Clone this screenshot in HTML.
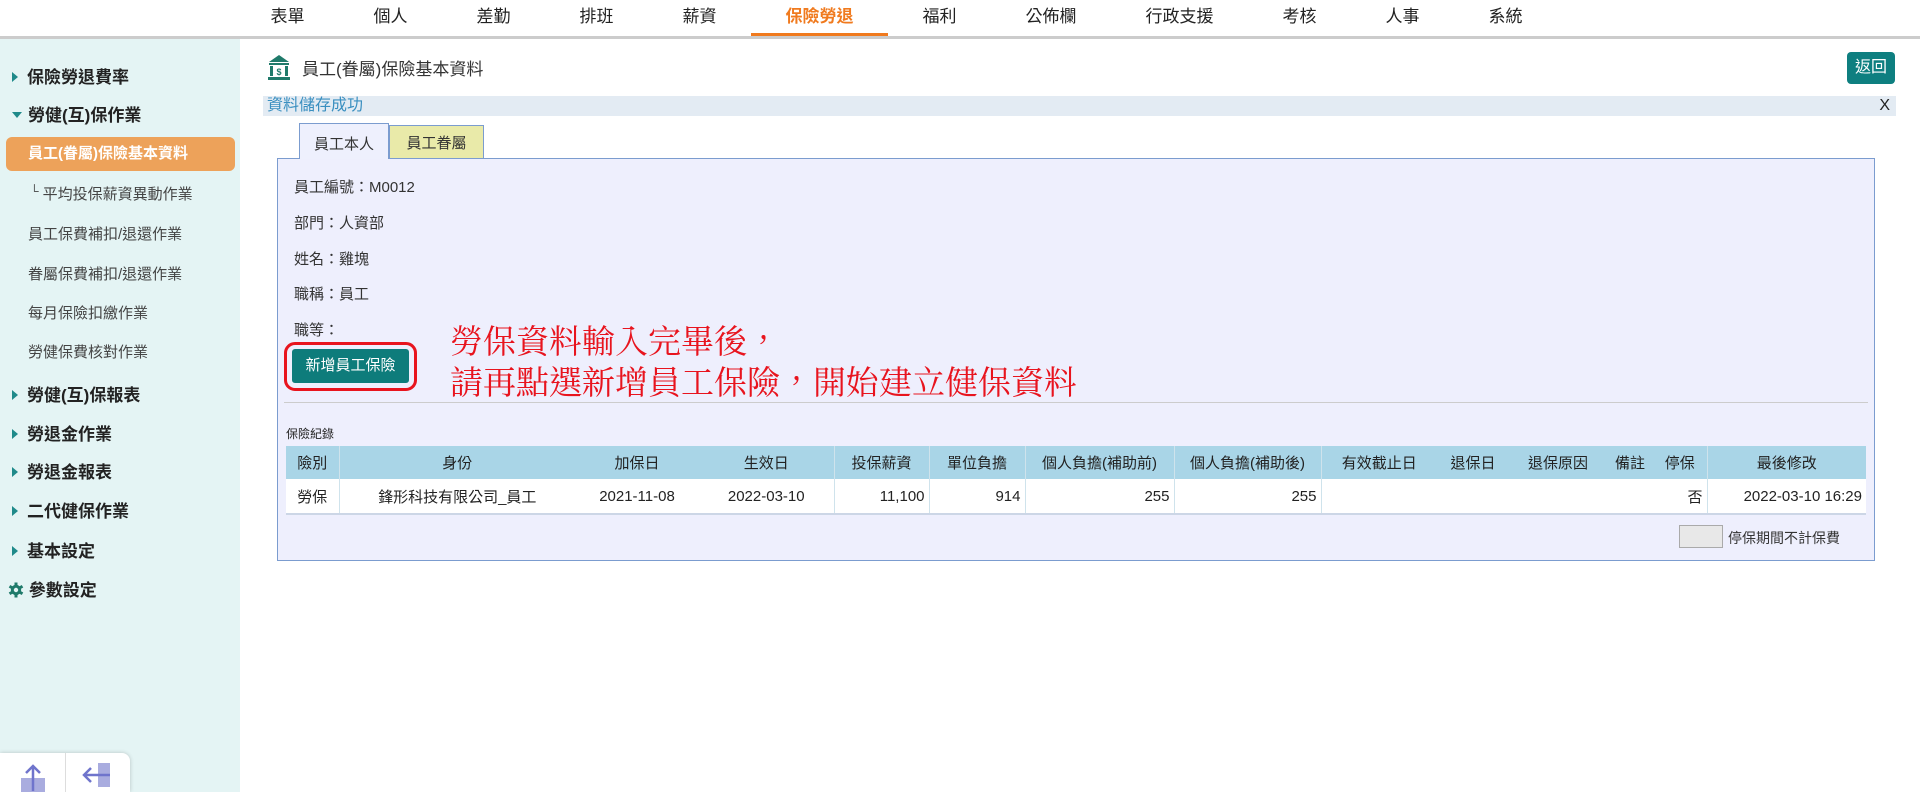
<!DOCTYPE html>
<html><head><meta charset="utf-8"><style>
*{margin:0;padding:0;box-sizing:border-box}
body{width:1920px;height:792px;overflow:hidden;background:#fff;font-family:"Liberation Sans","Noto Sans CJK TC",sans-serif;color:#333;position:relative}
.nav{position:absolute;left:236px;top:0;height:36px;display:flex}
.nav div{padding:0 34.5px;font-size:17px;line-height:34px;color:#222;height:36px;white-space:nowrap}
.nav div.on{color:#f07a1e;border-bottom:3px solid #f07a1e;font-weight:bold}
.gline{position:absolute;left:0;top:36px;width:1920px;height:3px;background:#ccc}
.side{position:absolute;left:0;top:39px;width:240px;height:753px;background:#e4f4f4}
.si{position:absolute;left:0;white-space:nowrap}
.m{font-size:17px;font-weight:bold;color:#222;left:12px}
.m:before{content:"";display:inline-block;border-left:6px solid #1f8a8a;border-top:5px solid transparent;border-bottom:5px solid transparent;margin-right:9px;vertical-align:1px}
.m.open:before{border-top:6px solid #1f8a8a;border-left:5px solid transparent;border-right:5px solid transparent;border-bottom:0;margin-right:6px;vertical-align:3px}
.s{font-size:15px;color:#444;left:28px}
.act{position:absolute;left:6px;top:98px;width:229px;height:34px;background:#eda25a;border-radius:6px;color:#fff;font-size:15px;font-weight:bold;line-height:34px;padding-left:22px}
.bot{position:absolute;left:0;top:753px;width:130px;height:39px;background:#fff;border-radius:0 8px 0 0;box-shadow:0 0 4px rgba(0,0,0,.2)}
.bot .dv{position:absolute;left:65px;top:0;width:1px;height:39px;background:#ddd}
.title{position:absolute;left:302px;top:55px;font-size:17px;color:#333}
.back{position:absolute;left:1847px;top:52px;width:48px;height:32px;background:#0e7f80;color:#fff;border-radius:4px;font-size:16px;line-height:32px;text-align:center}
.msg{position:absolute;left:263px;top:96px;width:1633px;height:20px;background:#e3ebf3;color:#3a8fc0;font-size:16px;line-height:20px;padding-left:4px}
.msg span{position:absolute;right:6px;top:0;color:#222}
.tab1{position:absolute;left:299px;top:123px;width:90px;height:36px;background:#eef0fd;border:1px solid #7b9ccf;border-bottom:none;font-size:15px;line-height:42px;text-align:center;z-index:2}
.tab2{position:absolute;left:389px;top:125px;width:95px;height:33px;background:#e9eaa9;border:1px solid #7b9ccf;border-bottom:none;font-size:15px;line-height:36px;text-align:center}
.panel{position:absolute;left:277px;top:158px;width:1598px;height:403px;background:#eeeffd;border:1px solid #7b9ccf}
.f{position:absolute;left:16px;font-size:15px;color:#333}
.ring{position:absolute;left:6px;top:183px;width:133px;height:49px;border:3px solid #e8141e;border-radius:11px}
.btn{position:absolute;left:14px;top:190px;width:117px;height:34px;background:#0e7c7b;color:#fff;font-size:15px;line-height:34px;text-align:center;border-radius:3px}
.anno{position:absolute;left:172px;top:164px;font-family:"Liberation Serif","Noto Serif CJK TC","Noto Serif CJK SC",serif;color:#e8141e;font-size:33px;line-height:41px;white-space:nowrap}
.sep{position:absolute;left:6px;top:243px;width:1584px;height:1px;background:#ccc}
.lbl{position:absolute;left:8px;top:266px;font-size:12px;color:#222}
table{position:absolute;left:8px;top:287px;border-collapse:collapse;font-size:15px;table-layout:fixed;width:1580px}
th{background:#a9d5e7;height:33px;font-weight:normal;color:#222;text-align:center;padding:0 3px}
td{background:#fff;height:35px;color:#222;padding:0 4px;border-bottom:2px solid #ccd6e6}
.bl{border-left:1px solid #cfe3ec}
.r{text-align:right}.c{text-align:center}
.chk{position:absolute;left:1401px;top:366px;width:44px;height:23px;background:#e8e8e8;border:1px solid #aaa}
.chkl{position:absolute;left:1450px;top:369px;font-size:14px;color:#333}
</style></head><body>
<div class="nav"><div>表單</div><div>個人</div><div>差勤</div><div>排班</div><div>薪資</div><div class="on">保險勞退</div><div>福利</div><div>公佈欄</div><div>行政支援</div><div>考核</div><div>人事</div><div>系統</div></div>
<div class="gline"></div>
<div class="side">
<div class="si m" style="top:24px">保險勞退費率</div>
<div class="si m open" style="top:62px">勞健(互)保作業</div>
<div class="act">員工(眷屬)保險基本資料</div>
<div class="si s" style="top:144px;left:30px"><span style="font-size:12px;vertical-align:4px">└</span> 平均投保薪資異動作業</div>
<div class="si s" style="top:184px">員工保費補扣/退還作業</div>
<div class="si s" style="top:224px">眷屬保費補扣/退還作業</div>
<div class="si s" style="top:263px">每月保險扣繳作業</div>
<div class="si s" style="top:302px">勞健保費核對作業</div>
<div class="si m" style="top:342px">勞健(互)保報表</div>
<div class="si m" style="top:381px">勞退金作業</div>
<div class="si m" style="top:419px">勞退金報表</div>
<div class="si m" style="top:458px">二代健保作業</div>
<div class="si m" style="top:498px">基本設定</div>
<div class="si" style="top:537px;left:8px;font-size:17px;font-weight:bold;color:#222"><svg width="16" height="16" viewBox="0 0 16 16" style="vertical-align:-2px"><g fill="#1f7a6a"><circle cx="8" cy="8" r="5.2"/><rect x="6.5" y="0.5" width="3" height="15"/><rect x="6.5" y="0.5" width="3" height="15" transform="rotate(60 8 8)"/><rect x="6.5" y="0.5" width="3" height="15" transform="rotate(120 8 8)"/></g><circle cx="8" cy="8" r="2.2" fill="#e4f4f4"/></svg> 參數設定</div>
</div>
<div class="bot"><div class="dv"></div>
<svg style="position:absolute;left:20px;top:10px" width="26" height="29" viewBox="0 0 26 29"><rect x="1" y="15" width="24" height="14" fill="#a9acdf"/><path d="M13 28V4M6 10l7-7 7 7" stroke="#6f74cc" stroke-width="2.5" fill="none"/></svg>
<svg style="position:absolute;left:82px;top:10px" width="30" height="26" viewBox="0 0 30 26"><rect x="16" y="0" width="12" height="24" fill="#a9acdf"/><path d="M28 12H3M9 5l-7 7 7 7" stroke="#6f74cc" stroke-width="2.5" fill="none"/></svg>
</div>
<svg style="position:absolute;left:268px;top:55px" width="22" height="26" viewBox="0 0 22 26"><path d="M11 0L1 7h20z" fill="#1f7a6a"/><rect x="1" y="8" width="20" height="2" fill="#1f7a6a"/><rect x="2" y="11" width="3" height="10" fill="#1f7a6a"/><rect x="17" y="11" width="3" height="10" fill="#1f7a6a"/><text x="11" y="20" font-size="9" font-weight="bold" text-anchor="middle" fill="#1f7a6a" font-family="Liberation Sans">$</text><rect x="0" y="22" width="22" height="3" fill="#1f7a6a"/></svg>
<div class="title">員工(眷屬)保險基本資料</div>
<div class="back">返回</div>
<div class="msg">資料儲存成功<span>X</span></div>
<div class="tab1">員工本人</div>
<div class="tab2">員工眷屬</div>
<div class="panel">
<div class="f" style="top:17px">員工編號：M0012</div>
<div class="f" style="top:53px">部門：人資部</div>
<div class="f" style="top:89px">姓名：雞塊</div>
<div class="f" style="top:124px">職稱：員工</div>
<div class="f" style="top:160px">職等：</div>
<div class="ring"></div>
<div class="btn">新增員工保險</div>
<div class="anno">勞保資料輸入完畢後，<br>請再點選新增員工保險，開始建立健保資料</div>
<div class="sep"></div>
<div class="lbl">保險紀錄</div>
<table>
<colgroup><col style="width:53px"><col style="width:236px"><col style="width:124px"><col style="width:135px"><col style="width:95px"><col style="width:96px"><col style="width:149px"><col style="width:147px"><col style="width:116px"><col style="width:72px"><col style="width:98px"><col style="width:46px"><col style="width:54px"><col style="width:159px"></colgroup>
<tr><th>險別</th><th class="bl">身份</th><th>加保日</th><th>生效日</th><th class="bl">投保薪資</th><th class="bl">單位負擔</th><th class="bl">個人負擔(補助前)</th><th class="bl">個人負擔(補助後)</th><th class="bl">有效截止日</th><th>退保日</th><th>退保原因</th><th>備註</th><th>停保</th><th class="bl">最後修改</th></tr>
<tr><td class="c">勞保</td><td class="c bl">鋒形科技有限公司_員工</td><td class="c">2021-11-08</td><td class="c">2022-03-10</td><td class="r bl">11,100</td><td class="r bl">914</td><td class="r bl">255</td><td class="r bl">255</td><td class="bl"></td><td></td><td></td><td></td><td class="r">否</td><td class="r bl">2022-03-10 16:29</td></tr>
</table>
<div class="chk"></div>
<div class="chkl">停保期間不計保費</div>
</div>
</body></html>
